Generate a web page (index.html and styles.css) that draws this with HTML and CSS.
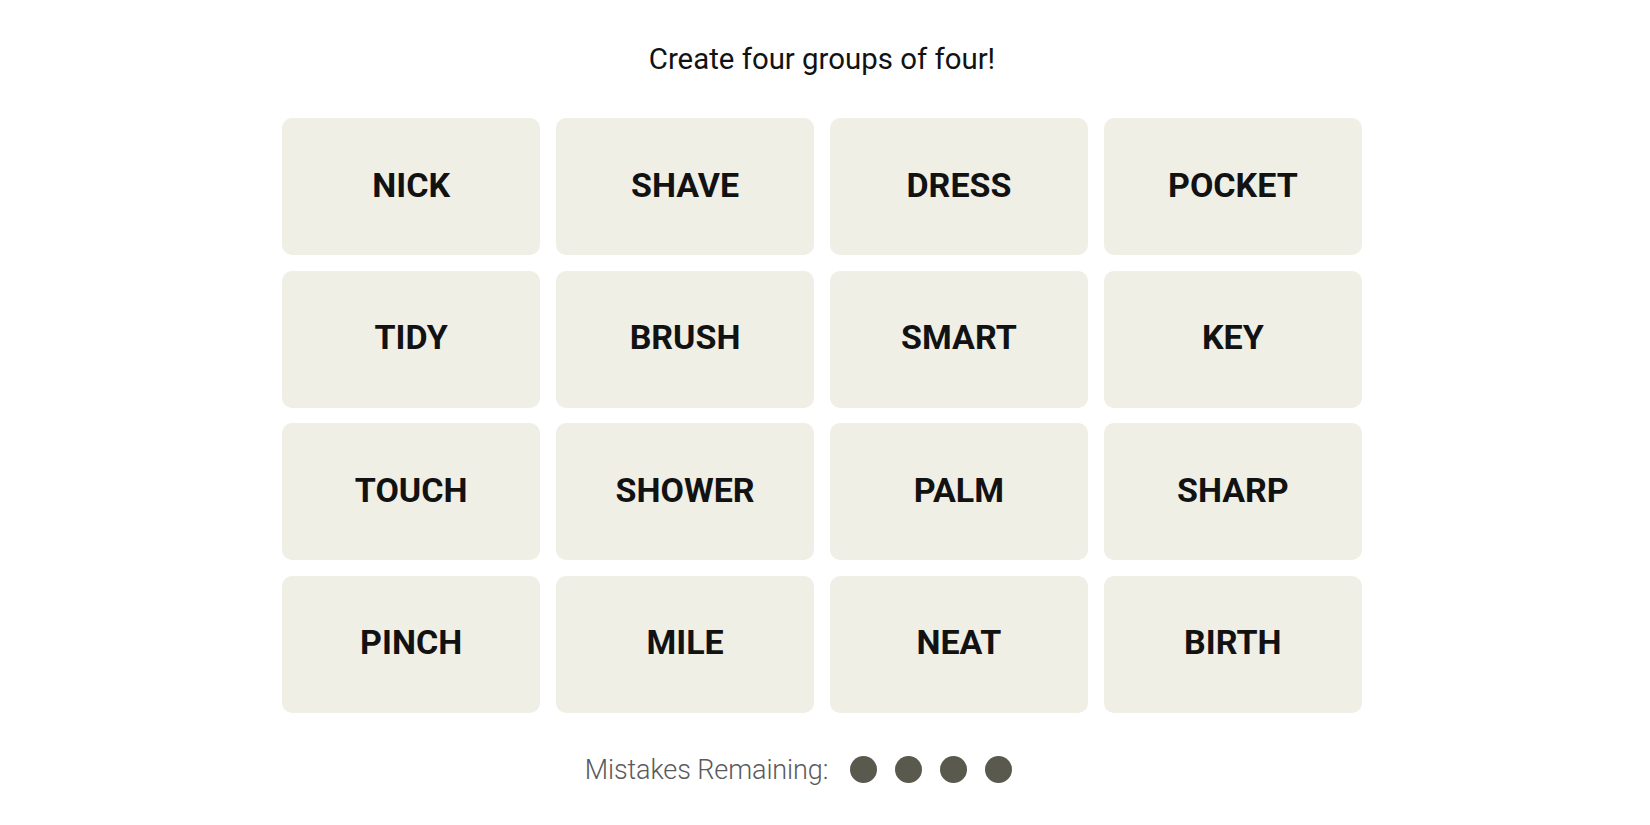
FILE: index.html
```html
<!DOCTYPE html>
<html lang="en">
<head>
<meta charset="utf-8">
<title>Connections</title>
<link rel="stylesheet" href="styles.css">
</head>
<body>
<main class="game">
  <p class="prompt">Create four groups of four!</p>
  <div class="board">
    <button class="tile">NICK</button>
    <button class="tile">SHAVE</button>
    <button class="tile">DRESS</button>
    <button class="tile">POCKET</button>
    <button class="tile">TIDY</button>
    <button class="tile">BRUSH</button>
    <button class="tile">SMART</button>
    <button class="tile">KEY</button>
    <button class="tile">TOUCH</button>
    <button class="tile">SHOWER</button>
    <button class="tile">PALM</button>
    <button class="tile">SHARP</button>
    <button class="tile">PINCH</button>
    <button class="tile">MILE</button>
    <button class="tile">NEAT</button>
    <button class="tile">BIRTH</button>
  </div>
  <div class="mistakes">
    <span class="mistakes-label">Mistakes Remaining:</span>
    <span class="dots">
      <span class="dot"></span>
      <span class="dot"></span>
      <span class="dot"></span>
      <span class="dot"></span>
    </span>
  </div>
</main>
</body>
</html>
```

FILE: styles.css
```css
html, body {
  margin: 0;
  background: #ffffff;
}

body {
  padding: 42px 6px 0 0;
  font-family: Roboto, "Liberation Sans", Arial, sans-serif;
  color: #121212;
}

.game {
  display: flex;
  flex-direction: column;
  align-items: center;
}

.prompt {
  margin: 0 0 42px 0;
  font-size: 29.4px;
  font-weight: 400;
  line-height: normal;
  color: #121212;
}

.board {
  width: 1080px;
  display: grid;
  grid-template-columns: repeat(4, 1fr);
  grid-auto-rows: 137px;
  gap: 15.6px;
}

.tile {
  border: none;
  margin: 0;
  padding: 0 0 4px 0;
  background: #efefe6;
  border-radius: 10px;
  font-family: Roboto, "Liberation Sans", Arial, sans-serif;
  font-weight: 700;
  font-size: 34px;
  color: #121212;
  text-transform: uppercase;
  display: flex;
  align-items: center;
  justify-content: center;
}

.mistakes {
  margin-top: 41px;
  display: flex;
  align-items: center;
  gap: 22px;
}

.mistakes-label {
  font-size: 27px;
  font-weight: 300;
  letter-spacing: -0.1px;
  color: #5a5a5a;
  line-height: normal;
}

.dots {
  display: flex;
  gap: 18px;
  padding-right: 47px;
}

.dot {
  width: 27px;
  height: 27px;
  border-radius: 50%;
  background: #5a594e;
}
```
